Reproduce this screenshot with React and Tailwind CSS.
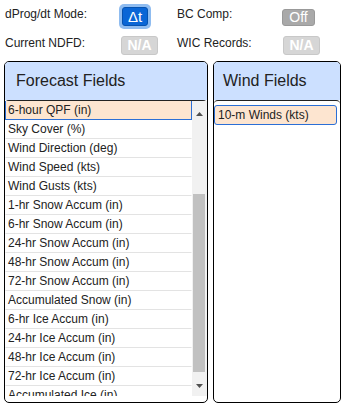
import React from 'react';

const forecastFields = [
  '6-hour QPF (in)',
  'Sky Cover (%)',
  'Wind Direction (deg)',
  'Wind Speed (kts)',
  'Wind Gusts (kts)',
  '1-hr Snow Accum (in)',
  '6-hr Snow Accum (in)',
  '24-hr Snow Accum (in)',
  '48-hr Snow Accum (in)',
  '72-hr Snow Accum (in)',
  'Accumulated Snow (in)',
  '6-hr Ice Accum (in)',
  '24-hr Ice Accum (in)',
  '48-hr Ice Accum (in)',
  '72-hr Ice Accum (in)',
  'Accumulated Ice (in)',
];

const Arrow = ({ down }) => (
  <svg width="7" height="4" viewBox="0 0 7 4">
    <path d={down ? 'M0 0 L7 0 L3.5 4 Z' : 'M0 4 L7 4 L3.5 0 Z'} fill="#505050" />
  </svg>
);

const App = () => {
  return (
    <div
      className="w-[343px] h-[408px] bg-white text-[#222] overflow-hidden"
      style={{ fontFamily: '"Liberation Sans", Arial, sans-serif' }}
    >
      {/* top controls */}
      <div className="pt-[4px] pl-[5px] text-[12px]">
        <div className="flex h-[27px]">
          <div className="w-[115px] pt-[1px]">dProg/dt Mode:</div>
          <div className="w-[57px]">
            <div className="inline-flex rounded-[5px] bg-[#8fbcf0] p-[3px] ml-[-1px]">
              <div className="w-[26px] h-[19px] rounded-[3px] bg-[#0a66d6] border border-[#0552b0] text-white text-[15px] leading-[17px] flex justify-center">
                Δt
              </div>
            </div>
          </div>
          <div className="w-[105px] pt-[1px]">BC Comp:</div>
          <div className="pt-[5px]">
            <div className="w-[33px] h-[17px] rounded-[3px] bg-[#a9a9a9] border border-[#999] text-white text-[14px] leading-[15px] flex justify-center">
              Off
            </div>
          </div>
        </div>
        <div className="flex h-[30px]">
          <div className="w-[116px] pt-[3px]">Current NDFD:</div>
          <div className="w-[56px] pt-[5px]">
            <div className="w-[37px] h-[19px] rounded-[3px] bg-[#d6d6d6] border border-[#c8c8c8] text-white text-[14px] leading-[17px] font-bold flex justify-center">
              N/A
            </div>
          </div>
          <div className="w-[106px] pt-[3px]">WIC Records:</div>
          <div className="pt-[5px]">
            <div className="w-[37px] h-[19px] rounded-[3px] bg-[#d6d6d6] border border-[#c8c8c8] text-white text-[14px] leading-[17px] font-bold flex justify-center">
              N/A
            </div>
          </div>
        </div>
      </div>

      {/* panels */}
      <div className="flex pl-[4px] gap-[5px]">
        <div className="w-[204px] h-[342px] border border-black rounded-[5px] flex flex-col">
          <div className="h-[38px] bg-[#cce0ff] rounded-t-[4px] flex items-center pl-[11px] text-[16px]">
            Forecast Fields
          </div>
          <div className="flex-1 flex flex-col border-t border-[#222] rounded-t-[4px] pb-[6px] min-h-0">
            <div className="flex-1 flex min-h-0">
              <div className="flex-1 overflow-hidden text-[12px]">
                {forecastFields.map((f, i) =>
                  i === 0 ? (
                    <div
                      key={f}
                      className="h-[19px] bg-[#fde5d0] border-x border-b border-[#2b6fd6] pl-[2px] leading-[18px]"
                    >
                      {f}
                    </div>
                  ) : (
                    <div
                      key={f}
                      className="h-[19px] border-x border-x-transparent border-b border-b-[#e3e3e3] pl-[2px] leading-[18px] whitespace-nowrap"
                    >
                      {f}
                    </div>
                  )
                )}
              </div>
              <div className="w-[15px] bg-[#f1f1f1] flex flex-col">
                <div className="h-[24px] flex items-center justify-center pt-[1px]">
                  <Arrow />
                </div>
                <div className="flex-1">
                  <div className="mt-[69px] ml-[1px] w-[12px] h-[178px] bg-[#c1c1c1]" />
                </div>
                <div className="h-[20px] flex items-center justify-center">
                  <Arrow down />
                </div>
              </div>
            </div>
          </div>
        </div>

        <div className="w-[128px] h-[342px] border border-black rounded-[5px] flex flex-col">
          <div className="h-[38px] bg-[#cce0ff] rounded-t-[4px] flex items-center pl-[9px] text-[16px]">
            Wind Fields
          </div>
          <div className="flex-1 border-t border-[#222] rounded-t-[4px] pt-[4px] pr-[3px] text-[12px]">
            <div className="h-[20px] bg-[#fde5d0] border border-[#2b6fd6] rounded-[3px] pl-[3px] leading-[18px]">
              10-m Winds (kts)
            </div>
          </div>
        </div>
      </div>
    </div>
  );
};

export default App;
